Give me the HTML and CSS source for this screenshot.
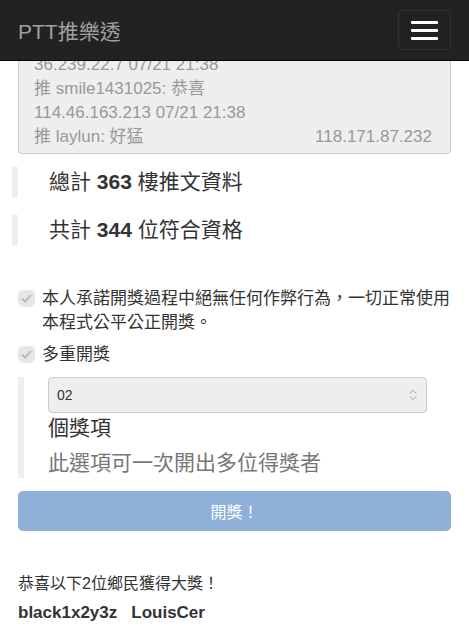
FILE: index.html
```html
<!DOCTYPE html>
<html lang="zh-Hant">
  <head>
    <meta charset="UTF-8" />
    <title>PTT推樂透</title>
    <link rel="stylesheet" href="styles.css">
  </head>
  <body>
    <nav class="navbar">
      <a class="brand" href="#">PTT推樂透</a>
      <button class="toggle" type="button">
        <span class="bar"></span>
        <span class="bar"></span>
        <span class="bar"></span>
      </button>
    </nav>

    <div class="container">
      <div class="comments">
        <div>36.239.22.7 07/21 21:38</div>
        <div>推 smile1431025: 恭喜</div>
        <div>114.46.163.213 07/21 21:38</div>
        <div class="split"><span>推 laylun: 好猛</span><span>118.171.87.232</span></div>
      </div>

      <blockquote class="stat first">總計 <b>363</b> 樓推文資料</blockquote>
      <blockquote class="stat">共計 <b>344</b> 位符合資格</blockquote>

      <label class="check">
        <span class="box">
          <svg width="11" height="9" viewBox="0 0 11 9"><path d="M1 4.5 L4 7.5 L10 1" fill="none" stroke="#b3b3b3" stroke-width="1.6"/></svg>
        </span>
        <span>本人承諾開獎過程中絕無任何作弊行為，一切正常使用本程式公平公正開獎。</span>
      </label>
      <label class="check">
        <span class="box">
          <svg width="11" height="9" viewBox="0 0 11 9"><path d="M1 4.5 L4 7.5 L10 1" fill="none" stroke="#b3b3b3" stroke-width="1.6"/></svg>
        </span>
        <span>多重開獎</span>
      </label>

      <blockquote class="multi">
        <div class="select">
          <span>02</span>
          <svg width="10" height="12" viewBox="0 0 10 12"><path d="M1.5 4.5 L5 1.5 L8.5 4.5 M1.5 7.5 L5 10.5 L8.5 7.5" fill="none" stroke="#aaa" stroke-width="1"/></svg>
        </div>
        <div class="unit">個獎項</div>
        <div class="hint">此選項可一次開出多位得獎者</div>
      </blockquote>

      <button class="draw" type="button" disabled>開獎！</button>

      <p class="result">恭喜以下2位鄉民獲得大獎！</p>
      <p class="winners"><b>black1x2y3z</b><b>LouisCer</b></p>
    </div>
  </body>
</html>
```

FILE: styles.css
```css
body {
  margin: 0;
  font-family: "Liberation Sans", "Noto Sans CJK TC", sans-serif;
  color: #333;
  background: #fff;
}

.navbar {
  position: fixed;
  top: 0;
  left: 0;
  right: 0;
  height: 60px;
  background: #222;
  border-bottom: 1px solid #080808;
  display: flex;
  align-items: center;
  justify-content: space-between;
  padding: 0 18px;
  z-index: 10;
}

.brand {
  color: #a0a0a0;
  font-size: 21px;
  text-decoration: none;
}

.toggle {
  width: 53px;
  height: 40px;
  background: transparent;
  border: 1px solid #333;
  border-radius: 4px;
  display: flex;
  flex-direction: column;
  align-items: center;
  justify-content: center;
  gap: 5px;
  padding: 0;
}

.bar {
  display: block;
  width: 27px;
  height: 3px;
  background: #fff;
  border-radius: 1px;
}

.container {
  padding: 46px 18px 20px;
}

.comments {
  background: #eee;
  border: 1px solid #ccc;
  border-radius: 4px;
  padding: 6px 18px 4px 15px;
  color: #999;
  font-size: 17px;
  line-height: 24px;
}

.split {
  display: flex;
  justify-content: space-between;
}

.stat {
  margin: 0 0 18px -6px;
  border-left: 6px solid #eee;
  padding: 0 0 0 31px;
  font-size: 21px;
  line-height: 30px;
}

.stat.first {
  margin-top: 13px;
}

.check {
  display: flex;
  align-items: flex-start;
  gap: 7px;
  font-size: 17px;
  line-height: 24px;
  margin-top: 8px;
}

.stat + .check {
  margin-top: 42px;
}

.box {
  flex: none;
  width: 17px;
  height: 17px;
  margin-top: 3px;
  background: #e6e6e6;
  border-radius: 5px;
  display: flex;
  align-items: center;
  justify-content: center;
}

.multi {
  margin: 10px 0 0;
  border-left: 6px solid #eee;
  padding: 0 24px 0 24px;
}

.select {
  height: 34px;
  background: #eee;
  border: 1px solid #ccc;
  border-radius: 4px;
  display: flex;
  align-items: center;
  justify-content: space-between;
  padding: 0 8px 0 8px;
  font-size: 14px;
}

.unit {
  font-size: 21px;
  line-height: 30px;
}

.hint {
  font-size: 21px;
  line-height: 30px;
  color: #777;
  margin-top: 5px;
}

.draw {
  display: block;
  width: 100%;
  height: 40px;
  margin-top: 13px;
  background: #8eb0d9;
  border: none;
  border-radius: 5px;
  color: #fff;
  font-family: inherit;
  font-size: 16px;
}

.result {
  margin: 41px 0 0;
  font-size: 16px;
  line-height: 24px;
}

.winners {
  margin: 5px 0 0;
  font-size: 17px;
  line-height: 24px;
  display: flex;
  gap: 14px;
}
```
